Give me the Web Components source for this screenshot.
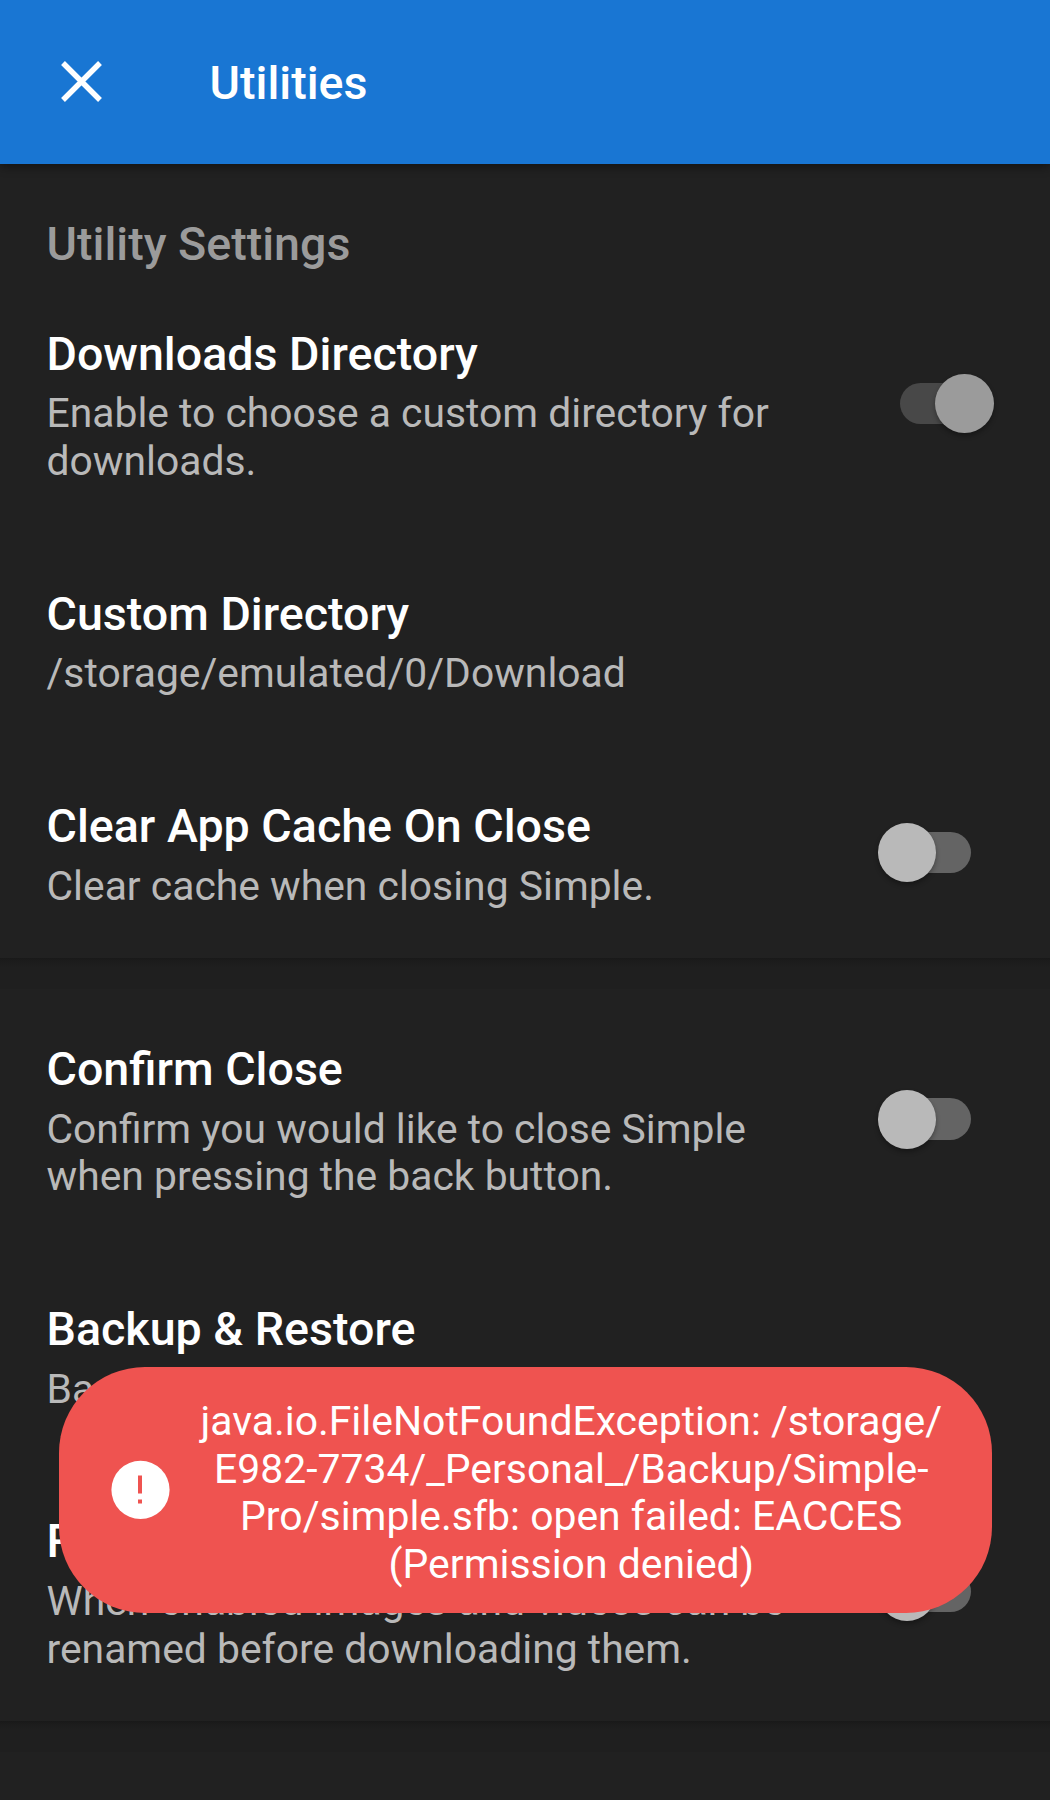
<!DOCTYPE html>
<html lang="en">
<head>
<meta charset="utf-8">
<title>Utilities</title>
<style>
  html, body { margin: 0; background: #212121; }
  body { width: 1050px; height: 1800px; overflow: hidden; font-family: Roboto, "Noto Sans", sans-serif; }
</style>
</head>
<body>
<utility-screen></utility-screen>
<script>
const define = (name, html) => {
  const template = document.createElement('template');
  template.innerHTML = html;
  customElements.define(name, class extends HTMLElement {
    constructor() {
      super();
      this.attachShadow({ mode: 'open' }).append(template.content.cloneNode(true));
    }
  });
};

define('app-bar', `
<style>
  :host { display: flex; align-items: center; box-sizing: border-box; height: 163.5px; padding: 0 0 0 61px; gap: 107.5px;
    background: #1976d3; color: #fff; box-shadow: 0 3px 9px rgba(0,0,0,.42); position: relative; }
  svg { display: block; width: 41px; height: 41px; flex: none; }
  h1 { margin: 4px 0 0; font-size: 46.6px; line-height: 55px; font-weight: 500; }
</style>
<svg viewBox="0 0 41 41" fill="none" stroke="#fff" stroke-width="5.4"><path d="M2 2L39 39M39 2L2 39"/></svg>
<h1><slot></slot></h1>`);

define('toggle-switch', `
<style>
  :host { display: grid; align-items: center; flex: none; width: 116px; height: 59px; }
  .track, .knob { grid-area: 1 / 1; }
  .track { width: 70.5px; height: 41.3px; border-radius: 21px; background: #646464; justify-self: center; }
  .knob { width: 58.6px; height: 59px; border-radius: 50%; background: #b9b9b9; box-shadow: 0 3px 5px rgba(0,0,0,.32); }
  :host([checked]) .track { background: #484848; }
  :host([checked]) .knob { justify-self: end; background: #9b9b9b; }
</style>
<div class="track"></div><div class="knob"></div>`);

define('setting-row', `
<style>
  :host { display: flex; align-items: center; justify-content: space-between; padding: 0 56.5px 101.7px 46.5px; }
  .title { color: #fff; font-size: 46.6px; line-height: 55px; font-weight: 500; margin-bottom: 8.7px; white-space: nowrap; }
  .text { color: #b9b9b9; font-size: 40.85px; line-height: 47.7px; white-space: nowrap; margin-bottom: -.7px; }
  ::slotted(toggle-switch) { margin-top: -4px; }
</style>
<div><div class="title"><slot name="title"></slot></div><div class="text"><slot></slot></div></div>
<slot name="control"></slot>`);

define('section-divider', `
<style>
  :host { display: block; height: 31px; background: linear-gradient(#191919, #1c1c1c 3px, #1f1f1f 9px, #1f1f1f); }
</style>`);

define('error-toast', `
<style>
  :host { position: absolute; left: 58.5px; top: 1367.3px; width: 933px; height: 245.4px; box-sizing: border-box; border-radius: 86px;
    background: #ef5350; color: #fff; display: flex; align-items: center; padding: 0 40px 0 52.5px; }
  svg { width: 59px; height: 59px; flex: none; display: block; }
  p { flex: 1; margin: 7px 0 0 21px; text-align: center; font-size: 40.9px; line-height: 47.7px; white-space: nowrap; }
</style>
<svg viewBox="0 0 59 59"><circle cx="29.5" cy="29.8" r="29.1" fill="#fff"/><path d="M27 15.5h4v18h-4zM27 39.5h4v4h-4z" fill="#ef5350"/></svg>
<p><slot></slot></p>`);

define('utility-screen', `
<style>
  :host { display: block; position: relative; height: 1800px; overflow: hidden; }
  h2 { margin: 0; padding: 53px 0 55px 46.5px; font-size: 46.6px; line-height: 55px; font-weight: 500; color: #9b9b9b; }
  .short { padding-bottom: 48.7px; }
  section-divider { margin-bottom: 52.5px; }
</style>
<app-bar>Utilities</app-bar>
<h2>Utility Settings</h2>
<setting-row><span slot="title">Downloads Directory</span>Enable to choose a custom directory for<br>downloads.<toggle-switch slot="control" checked></toggle-switch></setting-row>
<setting-row><span slot="title">Custom Directory</span>/storage/emulated/0/Download</setting-row>
<setting-row class="short"><span slot="title">Clear App Cache On Close</span>Clear cache when closing Simple.<toggle-switch slot="control"></toggle-switch></setting-row>
<section-divider></section-divider>
<setting-row><span slot="title">Confirm Close</span>Confirm you would like to close Simple<br>when pressing the back button.<toggle-switch slot="control"></toggle-switch></setting-row>
<setting-row><span slot="title">Backup &amp; Restore</span>Ba</setting-row>
<setting-row class="short"><span slot="title">R</span>When enabled images and videos can be<br>renamed before downloading them.<toggle-switch slot="control"></toggle-switch></setting-row>
<section-divider></section-divider>
<error-toast>java.io.FileNotFoundException: /storage/<br>E982-7734/_Personal_/Backup/Simple-<br>Pro/simple.sfb: open failed: EACCES<br>(Permission denied)</error-toast>`);
</script>
</body>
</html>
